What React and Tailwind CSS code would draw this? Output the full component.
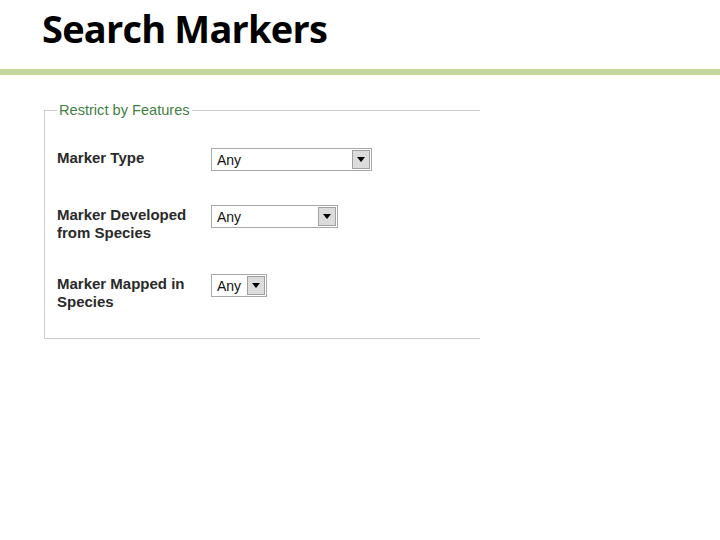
import React from "react";

const Select = ({ width }) => {
  return (
    <div
      className={`flex h-[23px] items-center justify-between border border-[#a9a9a9] bg-white pr-[1px] ${width}`}
    >
      <span className="pl-[5px] text-[14px] leading-none text-[#111]">Any</span>
      <span className="flex h-[19px] w-[18px] items-center justify-center border border-[#a0a0a0] bg-[#dcdcdc]">
        <svg width="8" height="5" viewBox="0 0 8 5">
          <path d="M0 0 L8 0 L4 5 Z" fill="#000" />
        </svg>
      </span>
    </div>
  );
};

const rows = [
  { label: "Marker Type", width: "w-[161px]", mt: "mt-[30px]" },
  { label: "Marker Developed from Species", width: "w-[127px]", mt: "mt-[34px]" },
  { label: "Marker Mapped in Species", width: "w-[56px]", mt: "mt-[32px]" },
];

export default function App() {
  return (
    <div className="h-[540px] w-[720px] bg-white" style={{ fontFamily: '"Liberation Sans", Arial, sans-serif' }}>
      <div className="pl-[42px] pt-[4px]">
        <h1
          className="text-[38px] font-bold leading-[48px] tracking-[-0.8px] text-black"
          style={{ fontFamily: '"Open Sans", "Noto Sans", sans-serif' }}
        >
          Search Markers
        </h1>
      </div>
      <div className="mt-[17px] h-[6px] w-full bg-[#c4d79b]" />
      <fieldset className="ml-[44px] mt-[27px] w-[436px] border border-r-0 border-[#cccccc] pb-[27px] pl-[12px]">
        <legend className="ml-[0px] px-[2px] text-[14.6px] leading-[16px] text-[#3f7f3f]">
          Restrict by Features
        </legend>
        {rows.map((row) => (
          <div key={row.label} className={`flex items-start ${row.mt}`}>
            <div className="w-[154px] pt-[1px] text-[15px] font-bold leading-[18px] text-[#2a2a2a]">
              <span className="block w-[140px]">{row.label}</span>
            </div>
            <Select width={row.width} />
          </div>
        ))}
      </fieldset>
    </div>
  );
}
